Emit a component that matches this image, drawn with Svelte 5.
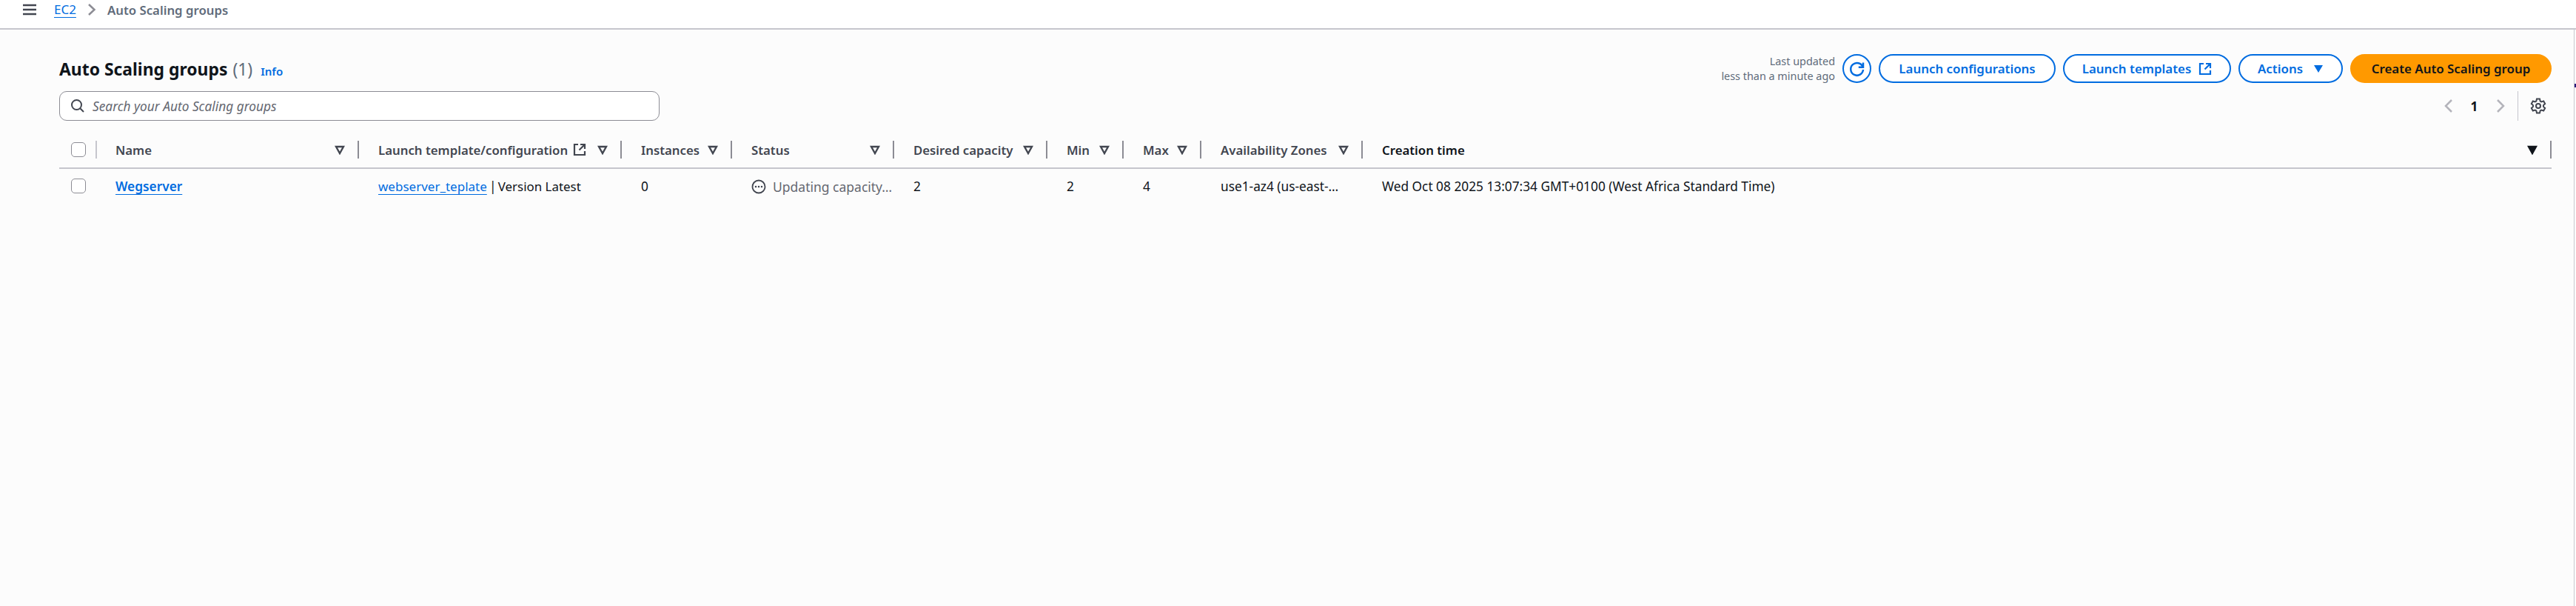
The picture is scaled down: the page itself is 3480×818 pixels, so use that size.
<script>
  const cols = [
    { label: 'Name' },
    { label: 'Launch template/configuration', ext: true },
    { label: 'Instances' },
    { label: 'Status' },
    { label: 'Desired capacity' },
    { label: 'Min' },
    { label: 'Max' },
    { label: 'Availability Zones' },
    { label: 'Creation time', strong: true }
  ];
</script>

<div class="page">
  <header class="topbar">
    <svg class="burger" width="20" height="16" viewBox="0 0 20 16"><path d="M1 2h18M1 8h18M1 14h18" /></svg>
    <a class="crumb" href="#top">EC2</a>
    <svg class="chev" width="12" height="18" viewBox="0 0 12 18"><path d="M2 2l7.500 7L2 16" /></svg>
    <span class="current">Auto Scaling groups</span>
  </header>

  <main class="main">
    <div class="titlerow">
      <div class="title">
        <h1>Auto Scaling groups</h1>
        <span class="count">(1)</span>
        <a class="info" href="#top">Info</a>
      </div>
      <div class="actions">
        <div class="updated">Last updated<br />less than a minute ago</div>
        <button class="btn round" aria-label="Refresh">
          <svg width="24" height="24" viewBox="0 0 24 24"><path d="M19.500 9.500A8.400 8.400 0 1 0 20 13" /><path d="M20 3.500v6.200h-6.200" /></svg>
        </button>
        <button class="btn cfg">Launch configurations</button>
        <button class="btn tpl">Launch templates
          <svg class="ext" width="18" height="18" viewBox="0 0 18 18"><path d="M7 2H2v14h14v-5M10 2h6v6M16 2L8.500 9.500" /></svg>
        </button>
        <button class="btn act">Actions
          <svg width="14" height="12" viewBox="0 0 14 12"><path class="fill" d="M1 1h12L7 11z" /></svg>
        </button>
        <button class="btn primary">Create Auto Scaling group</button>
      </div>
    </div>

    <div class="searchrow">
      <div class="search">
        <svg width="20" height="20" viewBox="0 0 20 20"><circle cx="8.500" cy="8.500" r="6.500" /><path d="M13.500 13.500L18 18" /></svg>
        <span>Search your Auto Scaling groups</span>
      </div>
      <div class="pager">
        <svg class="pg" width="14" height="20" viewBox="0 0 14 20"><path d="M11 2L3 10l8 8" /></svg>
        <span class="num">1</span>
        <svg class="pg" width="14" height="20" viewBox="0 0 14 20"><path d="M3 2l8 8-8 8" /></svg>
        <i class="pagesep"></i>
        <svg class="gear" width="22" height="22" viewBox="0 0 22 22">
          <path d="M9 1.500h4l.7 3 1.500.9 3-.9 2 3.500-2.200 2.100v1.800l2.200 2.100-2 3.500-3-.9-1.500.9-.7 3H9l-.7-3-1.500-.9-3 .9-2-3.500L4 11.900v-1.800L1.800 8l2-3.500 3 .9 1.500-.9z" />
          <circle cx="11" cy="11" r="3" />
        </svg>
      </div>
    </div>

    <div class="table">
      <div class="hd check"><i class="box"></i><i class="sep thin"></i></div>
      {#each cols as c}
        <div class="hd" class:strong={c.strong}>
          <span class="label">{c.label}</span>
          {#if c.ext}
            <svg class="ext dark" width="18" height="18" viewBox="0 0 18 18"><path d="M7 2H2v14h14v-5M10 2h6v6M16 2L8.500 9.500" /></svg>
          {/if}
          <span class="grow"></span>
          <svg class="sort" class:solid={c.strong} width="14" height="13" viewBox="0 0 14 13"><path d="M2 2h10L7 11z" /></svg>
          <i class="sep"></i>
        </div>
      {/each}

      <div class="td check"><i class="box"></i></div>
      <div class="td"><a class="name" href="#top">Wegserver</a></div>
      <div class="td"><a class="tpl-link" href="#top">webserver_teplate</a><span class="pipe">|</span><span class="ver">Version Latest</span></div>
      <div class="td">0</div>
      <div class="td status">
        <svg width="20" height="20" viewBox="0 0 20 20"><circle cx="10" cy="10" r="8.500" /><path class="dots" d="M6 10h.01M10 10h.01M14 10h.01" /></svg>
        <span>Updating capacity…</span>
      </div>
      <div class="td">2</div>
      <div class="td">2</div>
      <div class="td">4</div>
      <div class="td">use1-az4 (us-east-…</div>
      <div class="td">Wed Oct 08 2025 13:07:34 GMT+0100 (West Africa Standard Time)</div>
    </div>
  </main>
  <i class="rail"></i>
  <i class="edge"></i>
</div>

<style>
  :global(body) {
    margin: 0;
    background: #fcfcfc;
  }
  .page {
    position: relative;
    height: 818px;
    overflow: hidden;
    font-family: "Noto Sans", sans-serif;
    font-size: 17.300px;
    color: #0f141a;
    background: #fcfcfc;
  }
  svg { fill: none; stroke: currentColor; stroke-width: 2; flex: none; display: block; }
  a { color: #006ce0; text-decoration: underline; text-underline-offset: 4px; text-decoration-thickness: 1px; }

  .topbar {
    height: 40px;
    box-sizing: border-box;
    background: #fff;
    border-bottom: 2px solid #c6c6cd;
    display: flex;
    align-items: center;
    padding: 0 0 12px 30px;
  }
  .burger { color: #424650; stroke-width: 2.500; margin-right: 23px; }
  .crumb { font-size: 17px; line-height: 24px; }
  .chev { color: #8c8c94; stroke-width: 2.500; margin: 0 15px; }
  .current { font-weight: 600; font-size: 16.800px; color: #5f6b7a; }

  .main { padding: 33px 33px 0 80px; }
  .titlerow { display: flex; justify-content: space-between; align-items: center; height: 39px; }
  .title { display: flex; align-items: baseline; gap: 7px; margin-top: 1px; }
  h1 { margin: 0; font-size: 22.900px; font-weight: 700; color: #0f141a; line-height: 30px; }
  .count { font-size: 22.900px; color: #5f6b7a; }
  .info { font-size: 15px; font-weight: 600; text-decoration: none; margin-left: 4px; }

  .actions { display: flex; align-items: center; gap: 10px; }
  .updated { font-size: 14.400px; line-height: 20px; color: #5f6b7a; text-align: right; }
  .btn {
    height: 39px;
    box-sizing: border-box;
    border: 2.500px solid #006ce0;
    border-radius: 20px;
    background: #fff;
    color: #006ce0;
    font-family: inherit;
    font-size: 16.900px;
    font-weight: 600;
    display: flex;
    align-items: center;
    justify-content: center;
    gap: 10px;
    padding: 0;
  }
  .round { width: 39px; border-radius: 50%; }
  .round svg { stroke-width: 2.500; }
  .cfg { width: 239px; }
  .tpl { width: 227px; }
  .act { width: 141px; gap: 14px; }
  .primary { width: 272px; background: #ff9900; border-color: #ff9900; color: #0f141a; }
  .fill { fill: currentColor; stroke: none; }
  .ext { stroke-width: 2.200; }
  .dark { color: #424650; margin-left: 7px; }

  .searchrow { display: flex; justify-content: space-between; align-items: center; margin-top: 11px; }
  .search {
    width: 811px;
    height: 40px;
    box-sizing: border-box;
    border: 1.500px solid #8c8c94;
    border-radius: 10px;
    background: #fff;
    display: flex;
    align-items: center;
    gap: 10px;
    padding-left: 14px;
    color: #424650;
    font-style: italic;
    font-size: 17.300px;
  }
  .search span { color: #656871; }
  .pager { display: flex; align-items: center; height: 40px; color: #0f141a; }
  .pg { color: #b4b4bb; stroke-width: 2.500; }
  .num { font-weight: 700; width: 56px; text-align: center; font-size: 17.300px; }
  .pagesep { width: 1.500px; height: 40px; background: #c6c6cd; margin: 0 16px; }
  .gear { color: #424650; margin-right: 7px; }

  .table {
    display: grid;
    grid-template-columns: 50px 355px 355px 149px 219px 207px 103px 105px 218px 1fr;
    margin-top: 17px;
  }
  .hd {
    height: 48px;
    box-sizing: border-box;
    border-bottom: 2px solid #c6c6cd;
    display: flex;
    align-items: center;
    padding-left: 26px;
    padding-bottom: 2px;
    font-size: 16.800px;
    font-weight: 600;
    color: #424650;
    white-space: nowrap;
  }
  .hd.strong { color: #0f141a; }
  .grow { flex: 1; }
  .sort { color: #424650; stroke-width: 2.400; margin-right: 17px; }
  .sort.solid { color: #0f141a; fill: #0f141a; }
  .sep { width: 2px; height: 24px; background: #8c8c94; flex: none; }
  .sep.thin { width: 1.500px; background: #c6c6cd; margin-left: 13px; }
  .check { padding-left: 16px; display: flex; align-items: center; }
  .box {
    width: 20px;
    height: 20px;
    box-sizing: border-box;
    border: 1.500px solid #8c8c94;
    border-radius: 5px;
    background: #fff;
    flex: none;
  }
  .td {
    height: 47px;
    display: flex;
    align-items: center;
    padding-left: 26px;
    color: #0f141a;
    white-space: pre;
  }
  .td.check { padding-left: 16px; padding-bottom: 2px; box-sizing: border-box; }
  .name { font-weight: 600; }
  .tpl-link { font-size: 17px; }
  .pipe { margin: 0 2.200px 0 3.300px; }
  .ver { font-size: 16.900px; }
  .status { color: #656871; gap: 9px; font-size: 17.500px; }
  .status svg { color: #424650; stroke-width: 1.800; }
  .dots { stroke-width: 2.500; stroke-linecap: round; }
  .rail {
    position: absolute;
    top: 40px;
    right: 0;
    bottom: 0;
    width: 2px;
    background: #fff;
    border-left: 1.500px solid #c6c6cd;
  }
  .edge {
    position: absolute;
    right: 0;
    top: 113px;
    width: 2px;
    height: 5px;
    background: #2a1a7a;
  }
</style>
